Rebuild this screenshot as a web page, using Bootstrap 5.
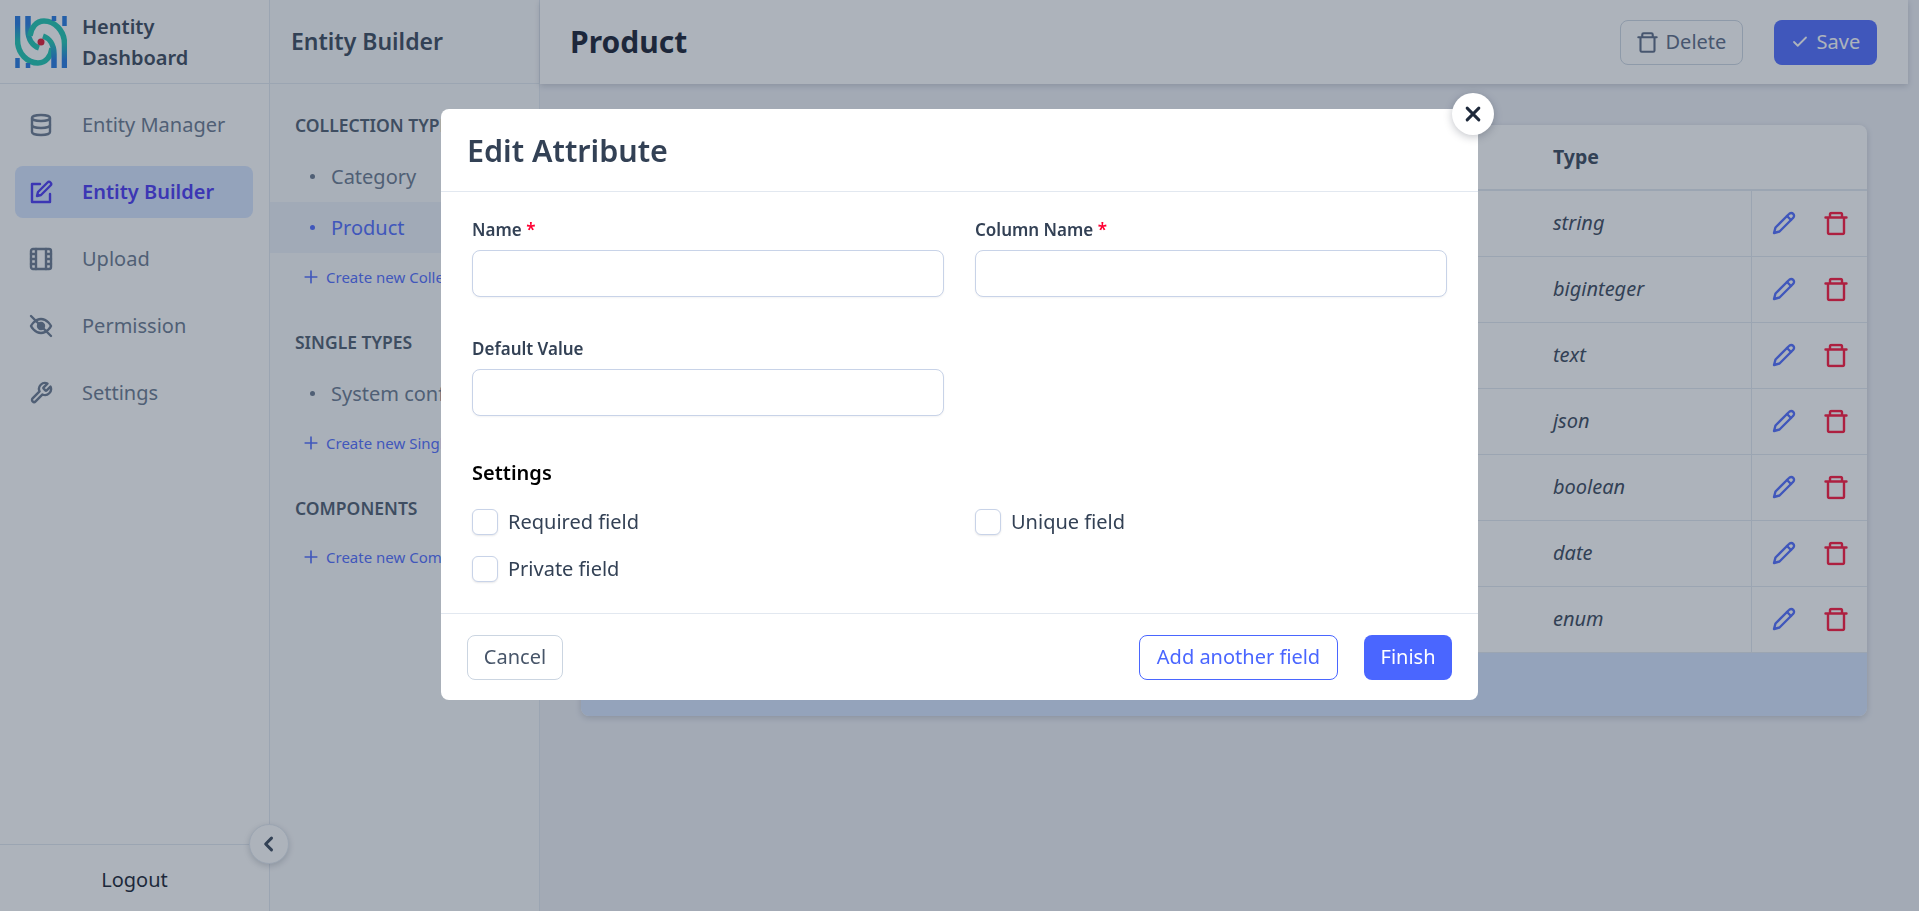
<!DOCTYPE html>
<html lang="en">
<head>
    <meta charset="UTF-8">
    <meta name="viewport" content="width=device-width, initial-scale=1.0">
    <title>Hentity Dashboard</title>
    <link href="https://cdn.jsdelivr.net/npm/bootstrap@5.3.0/dist/css/bootstrap.min.css" rel="stylesheet">
    <style>
        body { font-family: "Noto Sans", "Open Sans", sans-serif; font-size: 20px; color: #334155; background: #eef0f6; height: 911px; overflow: hidden; }
        .ic { fill: none; stroke: currentColor; stroke-width: 2.4; stroke-linecap: round; stroke-linejoin: round; flex-shrink: 0; }
        .ic-bold { stroke-width: 3.6; }
        .ic-plus { stroke-width: 2.8; }
        .side-main { width: 270px; flex-shrink: 0; background: #fff; border-right: 1px solid #e2e8f0; }
        .side-sub { width: 270px; flex-shrink: 0; background: #f9fafc; border-right: 1px solid #e2e8f0; }
        .top-cell { height: 84px; border-bottom: 1px solid #e2e8f0; }
        .brand-cell { padding-left: 15px; }
        .brand-name { font-weight: 600; font-size: 20px; line-height: 31px; margin-left: 15px; }
        .sub-title { font-size: 23px; font-weight: 600; padding-left: 21px; }
        .menu-list { padding-top: 15px; }
        .menu-link { height: 52px; margin: 0 16px 15px 15px; padding-left: 14px; border-radius: 8px; color: #64748b; font-size: 20px; text-decoration: none; gap: 29px; white-space: nowrap; }
        .menu-link.on { background: #d5e4ff; color: #4330f3; font-weight: 600; }
        .logout-cell { height: 67px; padding-top: 3px; border-top: 1px solid #e2e8f0; font-size: 20px; color: #0f172a; }
        .collapse-btn { position: absolute; left: 249px; top: 824px; width: 40px; height: 40px; padding: 0; border-radius: 50%; background: #fff; border: 1px solid #e2e8f0; color: #334155; box-shadow: 0 2px 6px rgba(15, 23, 42, .2); }
        .group-list { padding-top: 29px; }
        .group-title { font-size: 17.5px; font-weight: 600; color: #475569; line-height: 24px; margin: 0 0 14px 25px; white-space: nowrap; }
        .group-title.bare { margin-bottom: 25px; }
        .group-item { height: 51px; padding-left: 40px; font-size: 20px; color: #64748b; text-decoration: none; gap: 16px; white-space: nowrap; }
        .group-item .dot { width: 5px; height: 5px; border-radius: 50%; background: currentColor; }
        .group-item.on { background: #ebf0f8; color: #4a66ff; }
        .create-link { height: 24px; margin: 12px 0 41px 34px; font-size: 15px; color: #4a66ff; text-decoration: none; gap: 8px; white-space: nowrap; }
        .page-head { height: 84px; margin-right: 11px; background: #fff; padding: 0 31px 0 30px; box-shadow: 0 2px 6px rgba(15, 23, 42, .18); }
        .page-title { font-size: 30px; font-weight: 700; color: #0f172a; margin: 0; }
        .btn-plain { height: 45px; width: 123px; border: 1px solid #cbd5e1; border-radius: 8px; color: #556480; font-size: 20px; gap: 8px; margin-right: 31px; padding: 0; }
        .btn-save { height: 45px; width: 103px; background: #4a66ff; border: 0; border-radius: 8px; color: #fff; font-size: 20px; gap: 8px; padding: 0; }
        .attr-card { margin: 41px 52px 0 41px; background: #fff; border-radius: 8px; overflow: hidden; box-shadow: 0 2px 6px rgba(15, 23, 42, .18); }
        .attr-table { margin: 0; table-layout: fixed; --bs-table-bg: transparent; }
        .attr-table th, .attr-table td { padding: 0 0 0 22px; height: 66px; vertical-align: middle; border-color: #e2e8f0; color: #334155; }
        .attr-table th { height: 65px; font-size: 19.5px; font-weight: 700; border-bottom-width: 2px; }
        .attr-table td { font-size: 20px; font-style: italic; }
        .attr-table td.acts { border-left: 1px solid #e2e8f0; padding-left: 20px; }
        .acts-wrap { gap: 28px; }
        .attr-foot { height: 63px; background: #d5e4ff; }
        .col-type { width: 221px; }
        .col-acts { width: 115px; }
        .act-edit { color: #4a66ff; }
        .act-del { color: #ff0a33; }
        .dim-layer { --bs-backdrop-bg: #334155; --bs-backdrop-opacity: .4; }
        .attr-modal { --bs-modal-width: 1037px; --bs-modal-border-width: 0; --bs-modal-border-radius: 8px; --bs-modal-margin: 0; color: #334155; }
        .attr-modal .modal-dialog { margin-top: 109px; }
        .attr-modal .modal-header { height: 83px; padding: 2px 26px 0; border-bottom: 1px solid #e2e8f0; }
        .attr-modal .modal-title { font-size: 30.5px; font-weight: 600; }
        .attr-modal .modal-body { padding: 26px 31px 0; height: 421px; flex: none; }
        .attr-modal .modal-footer { height: 87px; padding: 0 26px; border-top: 1px solid #e2e8f0; gap: 26px; }
        .attr-modal .modal-footer > * { margin: 0; }
        .round-close { position: absolute; right: -16px; top: -16px; width: 42px; height: 42px; padding: 0; border: 0; border-radius: 50%; background: #fff; color: #1e293b; box-shadow: 0 2px 8px rgba(15, 23, 42, .25); }
        .field-row { --bs-gutter-x: 31px; }
        .field-label { font-size: 17px; font-weight: 600; line-height: 24px; margin-bottom: 8px; color: #334155; }
        .req-star { color: #ff0033; }
        .field-input { height: 47px; border: 1px solid #c8d3e8; border-radius: 8px; box-shadow: 0 1px 2px rgba(15, 23, 42, .05); }
        .field-gap { margin-bottom: 40px; }
        .settings-title { font-size: 20px; font-weight: 600; color: #000; line-height: 26px; margin: 44px 0 23px; }
        .chk-row { height: 26px; margin-bottom: 21px; padding: 0; gap: 10px; font-size: 20px; }
        .chk-row .form-check-input { width: 26px; height: 26px; margin: 0; border: 1px solid #c8d3e8; border-radius: 6px; box-shadow: 0 1px 2px rgba(15, 23, 42, .1); float: none; }
        .btn-cancel, .btn-add, .btn-finish { height: 45px; border-radius: 8px; font-size: 20px; padding: 0; }
        .btn-cancel { width: 96px; border: 1px solid #cbd5e1; color: #475569; }
        .btn-add { width: 199px; border: 1px solid #4a66ff; color: #4a66ff; }
        .btn-finish { width: 88px; border: 0; background: #4a66ff; color: #fff; }
        .footer-split { margin-right: auto !important; }
    </style>
</head>
<body>
    <svg width="0" height="0" class="position-absolute">
        <symbol id="i-trash" viewBox="0 0 24 24"><path d="M1.500 6h21M6 6V3a1.500 1.500 0 0 1 1.500-1.500h9A1.500 1.500 0 0 1 18 3v3M4 6v15a1.500 1.500 0 0 0 1.500 1.500h13A1.500 1.500 0 0 0 20 21V6"/></symbol>
        <symbol id="i-pencil" viewBox="0 0 24 24"><path d="M17 3a2.850 2.830 0 1 1 4 4L7.500 20.500 2 22l1.500-5.500Z"/><path d="m15 5 4 4"/></symbol>
        <symbol id="i-plus" viewBox="0 0 24 24"><path d="M12 2v20M2 12h20"/></symbol>
        <linearGradient id="armA" gradientUnits="userSpaceOnUse" x1="0" y1="8" x2="0" y2="26"><stop offset="0" stop-color="#1c74e0"/><stop offset="1" stop-color="#14c4ae"/></linearGradient>
        <g id="logoArm">
            <path d="M2.500 0V24C2.500 38 13 47 23 47C31 47 36 40 37 32" stroke="url(#armA)" stroke-width="5.500"/>
            <path d="M13 0V14C13 24 18 30 24 32" stroke="url(#armA)" stroke-width="5.500"/>
            <path d="M2.500 52V42M13 52V47" stroke="#1c74e0" stroke-width="4.500"/>
        </g>
    </svg>

    <div class="d-flex">
        <aside class="side-main d-flex flex-column vh-100">
            <div class="top-cell brand-cell d-flex align-items-center">
                <svg width="52" height="52" viewBox="0 0 52 52" fill="none">
                    <use href="#logoArm"/>
                    <use href="#logoArm" transform="rotate(180 26 26)"/>
                    <circle cx="26" cy="26" r="3.500" fill="#e0102c"/>
                </svg>
                <div class="brand-name">Hentity<br>Dashboard</div>
            </div>
            <nav class="menu-list flex-grow-1">
                <a href="#" class="menu-link d-flex align-items-center">
                    <svg class="ic" width="24" height="24" viewBox="0 0 24 24"><ellipse cx="12" cy="5" rx="9" ry="3"/><path d="M3 5v14a9 3 0 0 0 18 0V5"/><path d="M3 12a9 3 0 0 0 18 0"/></svg>
                    Entity Manager
                </a>
                <a href="#" class="menu-link on d-flex align-items-center">
                    <svg class="ic" width="24" height="24" viewBox="0 0 24 24"><path d="M11 4H3v18h18v-8"/><path d="M18.500 2.500a2.120 2.120 0 0 1 3 3L12 15l-4 1 1-4z"/></svg>
                    Entity Builder
                </a>
                <a href="#" class="menu-link d-flex align-items-center">
                    <svg class="ic" width="24" height="24" viewBox="0 0 24 24"><rect x="2" y="2" width="20" height="20" rx="2"/><path d="M7 2v20M17 2v20M2 7h5M2 12h5M2 17h5M17 7h5M17 12h5M17 17h5"/></svg>
                    Upload
                </a>
                <a href="#" class="menu-link d-flex align-items-center">
                    <svg class="ic" width="24" height="24" viewBox="0 0 24 24"><path d="M2 12s3.500-7 10-7 10 7 10 7-3.500 7-10 7-10-7-10-7z"/><circle cx="12" cy="12" r="3" fill="currentColor"/><path d="m2 2 20 20"/></svg>
                    Permission
                </a>
                <a href="#" class="menu-link d-flex align-items-center">
                    <svg class="ic" width="24" height="24" viewBox="0 0 24 24"><path d="M14.700 6.300a1 1 0 0 0 0 1.400l1.600 1.600a1 1 0 0 0 1.400 0l3.770-3.770a6 6 0 0 1-7.940 7.940l-6.910 6.910a2.120 2.120 0 0 1-3-3l6.910-6.910a6 6 0 0 1 7.940-7.940z"/></svg>
                    Settings
                </a>
            </nav>
            <div class="logout-cell d-flex align-items-center justify-content-center">Logout</div>
        </aside>
        <button class="collapse-btn btn d-flex align-items-center justify-content-center" aria-label="Collapse">
            <svg class="ic ic-bold" width="20" height="20" viewBox="0 0 24 24"><path d="m15 5-7 7 7 7"/></svg>
        </button>

        <div class="side-sub d-flex flex-column vh-100">
            <div class="top-cell d-flex align-items-center sub-title">Entity Builder</div>
            <div class="group-list">
                <div class="group-title">COLLECTION TYPES</div>
                <a href="#" class="group-item d-flex align-items-center"><span class="dot"></span>Category</a>
                <a href="#" class="group-item on d-flex align-items-center"><span class="dot"></span>Product</a>
                <a href="#" class="create-link d-flex align-items-center"><svg class="ic ic-plus" width="14" height="14" viewBox="0 0 24 24"><use href="#i-plus"/></svg>Create new Collection</a>
                <div class="group-title">SINGLE TYPES</div>
                <a href="#" class="group-item d-flex align-items-center"><span class="dot"></span>System config</a>
                <a href="#" class="create-link d-flex align-items-center"><svg class="ic ic-plus" width="14" height="14" viewBox="0 0 24 24"><use href="#i-plus"/></svg>Create new Single</a>
                <div class="group-title bare">COMPONENTS</div>
                <a href="#" class="create-link d-flex align-items-center"><svg class="ic ic-plus" width="14" height="14" viewBox="0 0 24 24"><use href="#i-plus"/></svg>Create new Component</a>
            </div>
        </div>

        <main class="flex-grow-1">
            <div class="page-head d-flex align-items-center justify-content-between">
                <h1 class="page-title">Product</h1>
                <div class="d-flex">
                    <button class="btn btn-plain d-flex align-items-center justify-content-center"><svg class="ic" width="21" height="21" viewBox="0 0 24 24"><use href="#i-trash"/></svg>Delete</button>
                    <button class="btn btn-save d-flex align-items-center justify-content-center"><svg class="ic" width="18" height="18" viewBox="0 0 24 24"><path d="M20 6 9 17l-5-5"/></svg>Save</button>
                </div>
            </div>
            <div class="attr-card">
                <table class="table attr-table">
                    <colgroup><col><col class="col-type"><col class="col-acts"></colgroup>
                    <thead><tr><th></th><th>Type</th><th></th></tr></thead>
                    <tbody id="attrRows"></tbody>
                </table>
                <div class="attr-foot"></div>
            </div>
        </main>
    </div>

    <div class="modal-backdrop show dim-layer"></div>
    <div class="modal show d-block attr-modal" tabindex="-1">
        <div class="modal-dialog">
            <div class="modal-content position-relative">
                <div class="modal-header">
                    <h5 class="modal-title">Edit Attribute</h5>
                </div>
                <button class="round-close d-flex align-items-center justify-content-center" aria-label="Close">
                    <svg class="ic ic-bold" width="20" height="20" viewBox="0 0 24 24"><path d="M5 5l14 14M19 5 5 19"/></svg>
                </button>
                <div class="modal-body">
                    <div class="row field-row">
                        <div class="col-6">
                            <div class="field-label">Name <span class="req-star">*</span></div>
                            <input class="form-control field-input field-gap">
                        </div>
                        <div class="col-6">
                            <div class="field-label">Column Name <span class="req-star">*</span></div>
                            <input class="form-control field-input field-gap">
                        </div>
                        <div class="col-6">
                            <div class="field-label">Default Value</div>
                            <input class="form-control field-input">
                        </div>
                    </div>
                    <div class="settings-title">Settings</div>
                    <div class="row field-row">
                        <div class="col-6">
                            <label class="form-check chk-row d-flex align-items-center"><input class="form-check-input" type="checkbox">Required field</label>
                            <label class="form-check chk-row d-flex align-items-center"><input class="form-check-input" type="checkbox">Private field</label>
                        </div>
                        <div class="col-6">
                            <label class="form-check chk-row d-flex align-items-center"><input class="form-check-input" type="checkbox">Unique field</label>
                        </div>
                    </div>
                </div>
                <div class="modal-footer">
                    <button class="btn btn-cancel footer-split">Cancel</button>
                    <button class="btn btn-add">Add another field</button>
                    <button class="btn btn-finish">Finish</button>
                </div>
            </div>
        </div>
    </div>

    <script>
        const attrTypes = ["string", "biginteger", "text", "json", "boolean", "date", "enum"];
        document.getElementById("attrRows").innerHTML = attrTypes.map(t => `
            <tr>
                <td></td>
                <td>${t}</td>
                <td class="acts">
                    <div class="acts-wrap d-flex align-items-center">
                        <svg class="ic act-edit" width="24" height="24" viewBox="0 0 24 24"><use href="#i-pencil"/></svg>
                        <svg class="ic act-del" width="24" height="25" viewBox="0 0 24 24"><use href="#i-trash"/></svg>
                    </div>
                </td>
            </tr>`).join("");
    </script>
</body>
</html>
